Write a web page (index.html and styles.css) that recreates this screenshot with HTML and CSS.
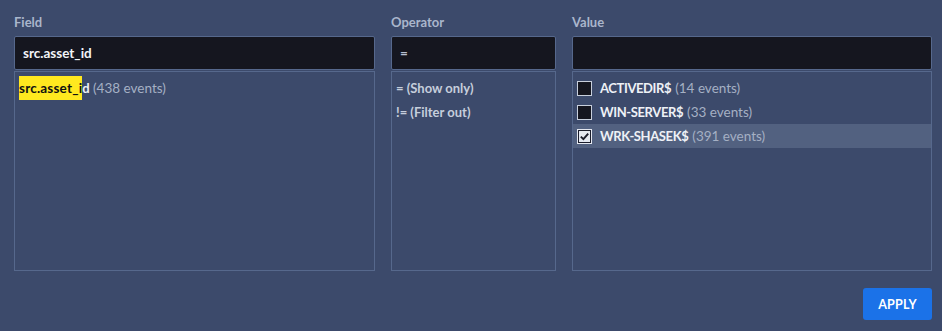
FILE: index.html
```html
<!DOCTYPE html>
<html>
<head>
<meta charset="utf-8">
<link rel="stylesheet" href="styles.css">
</head>
<body>
<div class="panel">
  <div class="columns">
    <div class="col col-field">
      <div class="label">Field</div>
      <div class="input"><span class="input-text">src.asset_id</span></div>
      <div class="list">
        <div class="row"><span class="hl">src.asset_i</span><span class="name">d</span> <span class="count">(438 events)</span></div>
      </div>
    </div>
    <div class="col col-op">
      <div class="label">Operator</div>
      <div class="input"><span class="input-text op">=</span></div>
      <div class="list">
        <div class="row op-row">= (Show only)</div>
        <div class="row op-row">!= (Filter out)</div>
      </div>
    </div>
    <div class="col col-value">
      <div class="label">Value</div>
      <div class="input"></div>
      <div class="list">
        <div class="row vrow"><span class="cb"></span><span class="name">ACTIVEDIR$</span> <span class="count">(14 events)</span></div>
        <div class="row vrow"><span class="cb"></span><span class="name">WIN-SERVER$</span> <span class="count">(33 events)</span></div>
        <div class="row vrow selected"><span class="cb checked"><svg viewBox="0 0 11 11" width="11" height="11"><path d="M1.8 5.6 L4.4 8.1 L9.2 2.6" fill="none" stroke="#1a1c2a" stroke-width="1.9"/></svg></span><span class="name">WRK-SHASEK$</span> <span class="count">(391 events)</span></div>
      </div>
    </div>
  </div>
  <div class="footer">
    <button class="apply">APPLY</button>
  </div>
</div>
</body>
</html>
```
FILE: styles.css
```css
html, body {
  margin: 0;
  padding: 0;
  background: #3c4a6b;
  width: 942px;
  height: 331px;
  overflow: hidden;
}
body {
  font-family: "Source Sans Pro", Lato, "Noto Sans", sans-serif;
  font-size: 13px;
  color: #e8ecf4;
}
.panel {
  padding: 12px 10px 0 14px;
}
.columns {
  display: flex;
  gap: 16px;
}
.col {
  display: flex;
  flex-direction: column;
}
.col-field { width: 361px; }
.col-op { width: 165px; }
.col-value { width: 360px; }
.label {
  height: 24px;
  line-height: 20px;
  font-weight: 700;
  color: #aab6cc;
  font-size: 13px;
}
.input {
  box-sizing: border-box;
  height: 34px;
  background: #15161f;
  border: 1px solid #56688c;
  border-radius: 2px;
  padding: 0 8px;
  display: flex;
  align-items: center;
}
.input-text {
  font-weight: 700;
  color: #f2f4f8;
  font-size: 13.5px;
}
.input-text.op {
  color: #b7c0d2;
}
.list {
  box-sizing: border-box;
  margin-top: 1px;
  height: 200px;
  border: 1px solid #56688c;
  padding: 4px 0;
}
.row {
  height: 24px;
  line-height: 24px;
  padding-left: 4px;
  white-space: nowrap;
}
.hl {
  background: #ffe81f;
  color: #111;
  font-weight: 700;
  display: inline-block;
  font-size: 13.5px;
  letter-spacing: 0.2px;
}
.name {
  font-weight: 700;
  color: #eef1f6;
}
.count {
  color: #a5b0c4;
  font-size: 13.5px;
}
.op-row {
  color: #c6cedc;
  font-weight: 700;
}
.vrow {
  display: flex;
  align-items: center;
}
.vrow .name {
  margin-left: 8px;
  margin-right: 4px;
  letter-spacing: -0.4px;
}
.selected {
  background: #526180;
}
.cb {
  box-sizing: border-box;
  width: 15px;
  height: 15px;
  background: #15161f;
  border: 1px solid #c8cfdc;
  display: inline-flex;
  align-items: center;
  justify-content: center;
}
.cb.checked {
  background: #e4e8f0;
  border: 1px solid #e4e8f0;
  box-shadow: inset 0 0 0 1px #1a1c2a;
}
.cb svg { display: block; }
.footer {
  display: flex;
  justify-content: flex-end;
  margin-top: 17px;
}
.apply {
  width: 69px;
  height: 32px;
  background: #1b72e8;
  color: #ffffff;
  border: none;
  border-radius: 3px;
  font-family: "Source Sans Pro", Lato, "Noto Sans", sans-serif;
  font-weight: 700;
  font-size: 12.5px;
  letter-spacing: 0.2px;
  padding: 0;
}
```
